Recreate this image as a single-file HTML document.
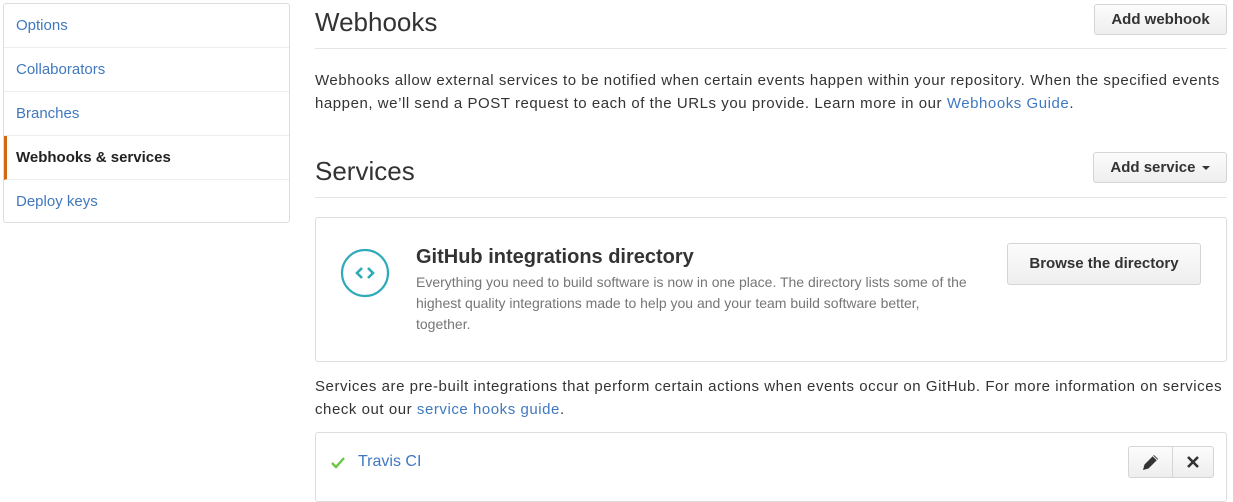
<!DOCTYPE html>
<html><head><meta charset="utf-8"><style>
*{box-sizing:border-box;margin:0;padding:0}
body{width:1233px;height:491px;overflow:hidden;background:#fff;font-family:"Liberation Sans",Arial,sans-serif;color:#333;position:relative}
.a{position:absolute}
a{color:#4078c0;text-decoration:none}
.side{left:3px;top:3px;width:287px;height:220px;border:1px solid #ddd;border-radius:3px}
.side div{height:44px;line-height:44px;padding-left:12px;font-size:15px;color:#4078c0;border-bottom:1px solid #eee}
.side div:last-child{border-bottom:none}
.side .sel{color:#222;font-weight:bold;border-left:3px solid #d26911;padding-left:9px}
.btn{border:1px solid #d5d5d5;border-radius:3px;background:linear-gradient(#fcfcfc,#eee);font-weight:bold;font-size:15px;color:#333;text-align:center}
h2{font-weight:normal;font-size:26px;color:#333}
.hr{height:1px;background:#e5e5e5;left:315px;width:912px}
p{font-size:15px;line-height:23px;letter-spacing:0.55px}
</style></head><body>
<div class="a side">
<div>Options</div><div>Collaborators</div><div>Branches</div><div class="sel">Webhooks &amp; services</div><div>Deploy keys</div>
</div>
<h2 class="a" style="left:315px;top:7px">Webhooks</h2>
<div class="a btn" style="left:1094px;top:4px;width:133px;height:31px;line-height:29px">Add webhook</div>
<div class="a hr" style="top:48px"></div>
<p class="a" style="left:315px;top:69px;width:915px">Webhooks allow external services to be notified when certain events happen within your repository. When the specified events happen, we’ll send a POST request to each of the URLs you provide. Learn more in our <a>Webhooks Guide</a>.</p>
<h2 class="a" style="left:315px;top:156px">Services</h2>
<div class="a btn" style="left:1093px;top:152px;width:134px;height:31px;line-height:29px">Add service <span style="display:inline-block;width:0;height:0;border-left:4px solid transparent;border-right:4px solid transparent;border-top:4px solid #333;vertical-align:middle;margin-left:2px"></span></div>
<div class="a hr" style="top:197px"></div>
<div class="a" style="left:315px;top:217px;width:912px;height:145px;border:1px solid #ddd;border-radius:3px"></div>
<svg class="a" style="left:340px;top:248px" width="50" height="50"><circle cx="25" cy="25" r="23" fill="none" stroke="#2eaab8" stroke-width="2.2"/><path d="M22 20l-5 5 5 5M28 20l5 5-5 5" fill="none" stroke="#2eaab8" stroke-width="2.6"/></svg>
<div class="a" style="left:416px;top:246px;font-size:20px;font-weight:bold;color:#333">GitHub integrations directory</div>
<div class="a" style="left:416px;top:272px;width:560px;font-size:14px;line-height:21px;color:#767676">Everything you need to build software is now in one place. The directory lists some of the highest quality integrations made to help you and your team build software better, together.</div>
<div class="a btn" style="left:1007px;top:243px;width:194px;height:42px;line-height:40px">Browse the directory</div>
<p class="a" style="left:315px;top:375px;width:915px">Services are pre-built integrations that perform certain actions when events occur on GitHub. For more information on services check out our <a>service hooks guide</a>.</p>
<div class="a" style="left:315px;top:432px;width:912px;height:70px;border:1px solid #ddd;border-radius:3px"></div>
<svg class="a" style="left:330px;top:456px" width="16" height="14"><path d="M2 7l4 4 8-9" fill="none" stroke="#6cc644" stroke-width="2.4"/></svg>
<div class="a" style="left:358px;top:453px;font-size:16px;color:#4078c0">Travis CI</div>
<div class="a btn" style="left:1128px;top:446px;width:86px;height:32px;display:flex;padding:0">
<div style="width:44px;border-right:1px solid #d5d5d5;display:flex;align-items:center;justify-content:center"><svg width="20" height="20"><path d="M2 18l1.5-5.5L13 3l4 4-9.5 9.5z" fill="#333"/><path d="M12 4l4 4" stroke="#eee" stroke-width="1"/></svg></div>
<div style="flex:1;display:flex;align-items:center;justify-content:center"><svg width="14" height="14"><path d="M2 2l10 10M12 2L2 12" stroke="#333" stroke-width="2.6"/></svg></div>
</div>
</body></html>
